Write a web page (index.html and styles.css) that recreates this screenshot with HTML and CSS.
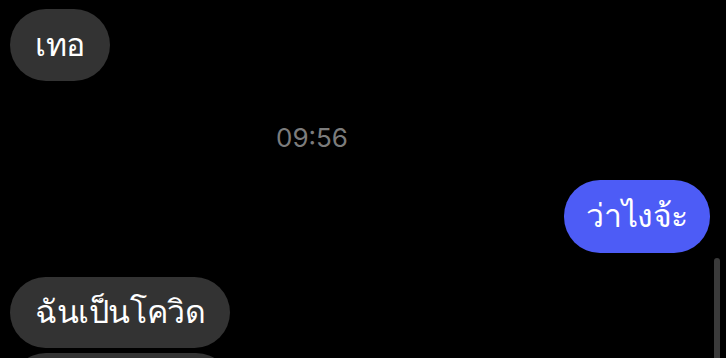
FILE: index.html
```html
<!DOCTYPE html>
<html lang="th">
<head>
<meta charset="utf-8">
<link rel="stylesheet" href="styles.css">
</head>
<body>
<div class="chat">
  <div class="bubble incoming first">เทอ</div>
  <div class="time">09:56</div>
  <div class="bubble outgoing">ว่าไงจ้ะ</div>
  <div class="bubble incoming third">ฉันเป็นโควิด</div>
  <div class="bubble incoming fourth">&nbsp;</div>
</div>
<div class="scrollbar"></div>
</body>
</html>
```
FILE: styles.css
```css
html, body {
  margin: 0;
  padding: 0;
  background: #000;
  width: 726px;
  height: 358px;
  overflow: hidden;
}
.chat {
  display: flex;
  flex-direction: column;
  align-items: flex-start;
  padding: 9px 16px 0 10px;
  font-family: "Noto Sans", sans-serif;
}
.bubble {
  height: 72px;
  display: flex;
  align-items: center;
  padding: 0 25px 2px 25px;
  border-radius: 36px;
  font-size: 32px;
  letter-spacing: -0.4px;
  color: #fff;
  background: #333333;
  box-sizing: border-box;
}
.outgoing {
  align-self: flex-end;
  background: #4d5cf6;
  height: 73px;
  padding: 0 22px 2px 22px;
}
.time {
  margin: 41px 0 26px 266px;
  font-family: Inter, Roboto, sans-serif;
  font-size: 26px;
  color: #7c7c7c;
  line-height: 32px;
}
.third {
  margin-top: 24px;
  height: 71px;
}
.fourth {
  margin-top: 5px;
  width: 222px;
}
.scrollbar {
  position: absolute;
  left: 714px;
  top: 258px;
  width: 6px;
  height: 110px;
  border-radius: 3px;
  background: #3a3a3a;
}
```
